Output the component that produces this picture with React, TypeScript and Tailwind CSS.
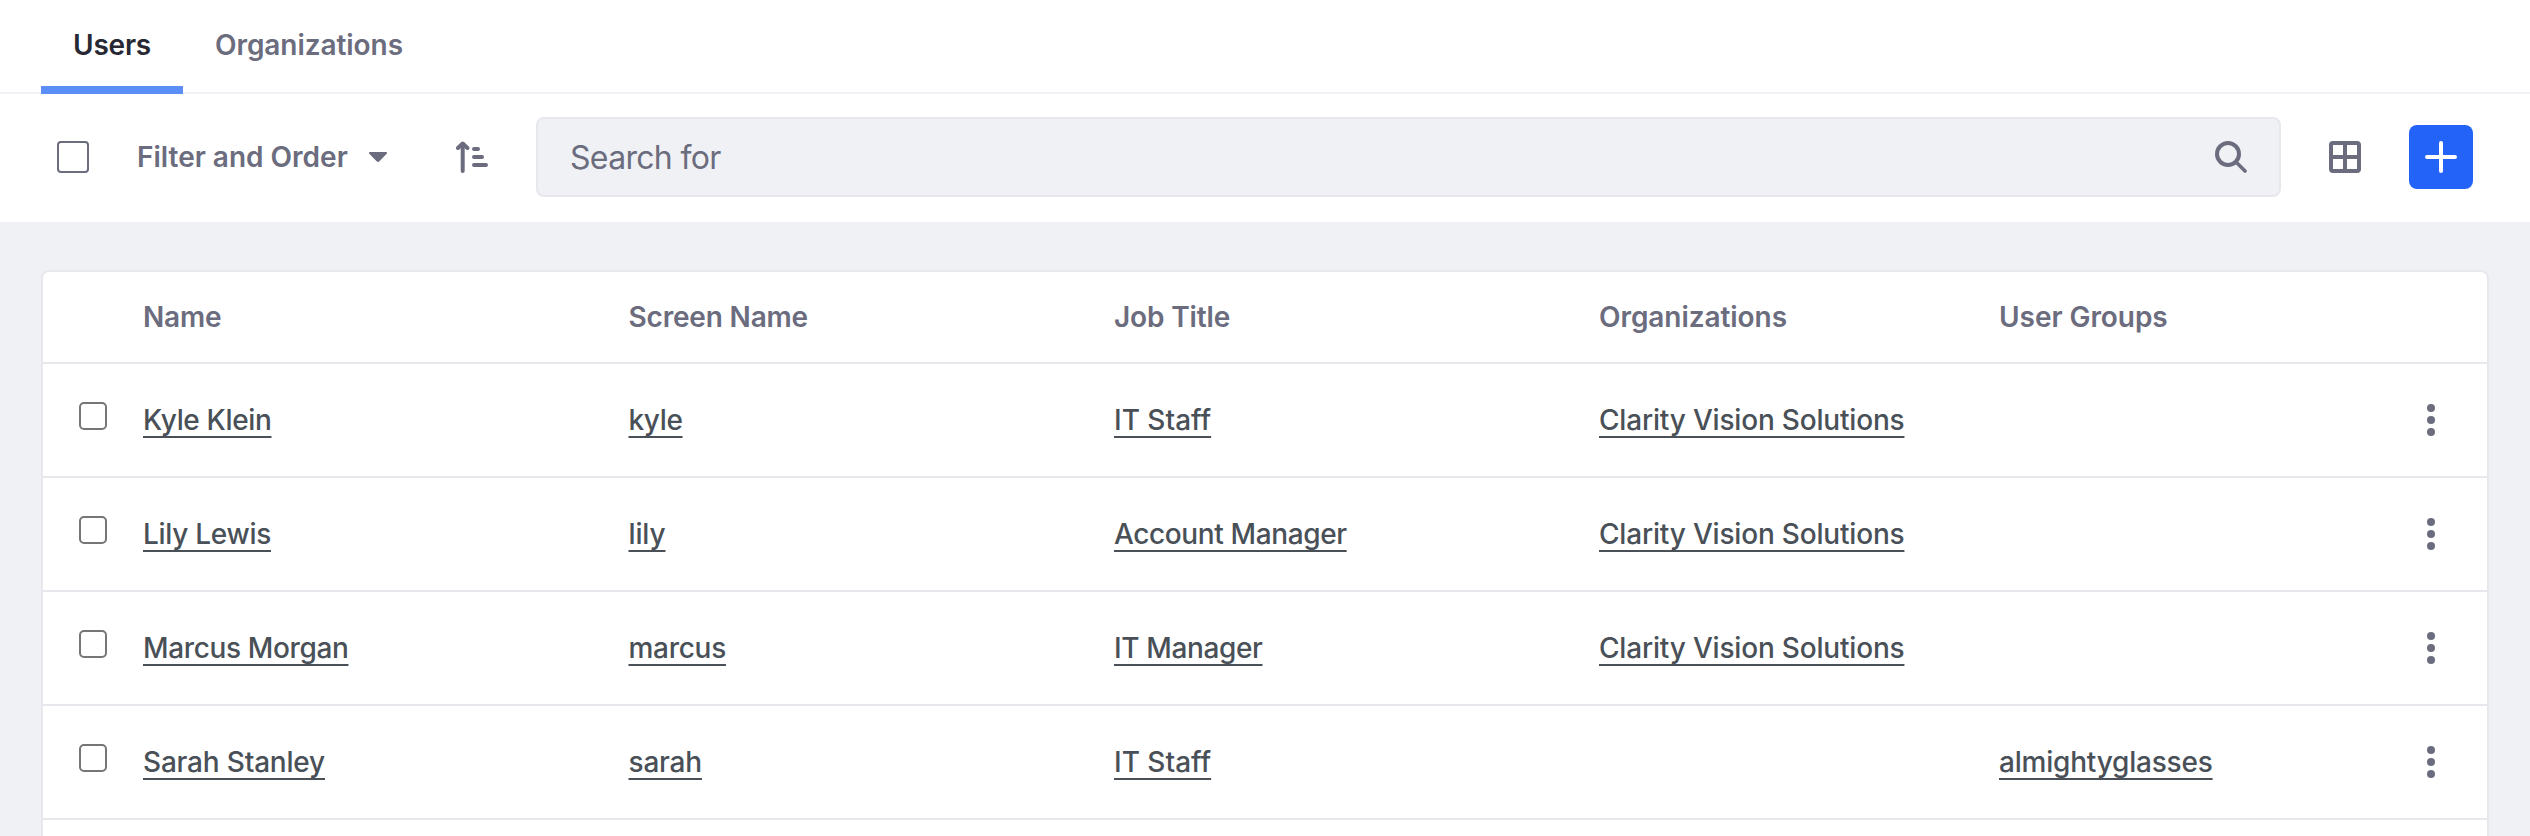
type Link = { text: string; tracking: string };
type User = {
  name: Link;
  screenName: Link;
  jobTitle: Link;
  organization?: Link;
  userGroup?: Link;
};

const clarity: Link = { text: 'Clarity Vision Solutions', tracking: 'tracking-[-0.19px]' };

const users: User[] = [
  {
    name: { text: 'Kyle Klein', tracking: 'tracking-[-0.35px]' },
    screenName: { text: 'kyle', tracking: 'tracking-[-0.35px]' },
    jobTitle: { text: 'IT Staff', tracking: 'tracking-normal' },
    organization: clarity,
  },
  {
    name: { text: 'Lily Lewis', tracking: 'tracking-[-0.29px]' },
    screenName: { text: 'lily', tracking: 'tracking-[-0.12px]' },
    jobTitle: { text: 'Account Manager', tracking: 'tracking-[-0.38px]' },
    organization: clarity,
  },
  {
    name: { text: 'Marcus Morgan', tracking: 'tracking-[-0.36px]' },
    screenName: { text: 'marcus', tracking: 'tracking-[-0.28px]' },
    jobTitle: { text: 'IT Manager', tracking: 'tracking-[-0.37px]' },
    organization: clarity,
  },
  {
    name: { text: 'Sarah Stanley', tracking: 'tracking-[-0.19px]' },
    screenName: { text: 'sarah', tracking: 'tracking-[-0.2px]' },
    jobTitle: { text: 'IT Staff', tracking: 'tracking-normal' },
    userGroup: { text: 'almightyglasses', tracking: 'tracking-[-0.21px]' },
  },
];

function SortIcon() {
  return (
    <svg className="size-8 shrink-0" viewBox="0 0 32 32" fill="none" stroke="currentColor" strokeWidth="4" strokeLinecap="round" strokeLinejoin="round">
      <path d="M6.7 30V3" />
      <path d="M2 7 6.7 2.5 11.4 7" />
      <path d="M18 8h4M18 16h8M18 24h12" />
    </svg>
  );
}

function SearchIcon() {
  return (
    <svg className="size-8 shrink-0" viewBox="0 0 32 32" fill="none" stroke="currentColor" strokeWidth="4" strokeLinecap="round">
      <circle cx="13" cy="13" r="11" />
      <path d="M21.5 21.5 30 30" strokeWidth="3.6" />
    </svg>
  );
}

function CardsIcon() {
  return (
    <svg className="size-8 shrink-0" viewBox="0 0 32 32" fill="currentColor" fillRule="evenodd">
      <path d="M4 0h24a4 4 0 0 1 4 4v24a4 4 0 0 1-4 4H4a4 4 0 0 1-4-4V4a4 4 0 0 1 4-4ZM4 4v10h10V4ZM18 4v10h10V4ZM4 18v10h10V18ZM18 18v10h10V18Z" />
    </svg>
  );
}

function PlusIcon() {
  return (
    <svg className="size-8" viewBox="0 0 32 32" stroke="currentColor" strokeWidth="4" strokeLinecap="round">
      <path d="M16 2v28M2 16h28" />
    </svg>
  );
}

function CaretIcon() {
  return (
    <svg className="h-[10px] w-[18px]" viewBox="0 0 18 10" fill="currentColor">
      <path d="M1 0h16c.9 0 1.3 1 .7 1.7l-7.3 7.6c-.8.9-2 .9-2.8 0L.3 1.7C-.3 1 .1 0 1 0Z" />
    </svg>
  );
}

function DotsIcon() {
  return (
    <svg className="h-8 w-2" viewBox="0 0 8 32" fill="currentColor">
      <circle cx="4" cy="4" r="4" />
      <circle cx="4" cy="16" r="4" />
      <circle cx="4" cy="28" r="4" />
    </svg>
  );
}

function Cell({ link }: { link?: Link }) {
  return (
    <div>
      {link && (
        <a className={`font-medium text-[#495057] underline decoration-2 underline-offset-[6px] [text-decoration-skip-ink:none] ${link.tracking}`}>
          {link.text}
        </a>
      )}
    </div>
  );
}

const columns = 'grid grid-cols-[100px_485.5px_485.5px_485px_400px_1fr] items-center border-b-2 border-[#e7e7ed]';

export default function App() {
  return (
    <div className="h-[836px] overflow-hidden bg-[#f0f1f5] font-['Inter',sans-serif] text-[28px] leading-[42px] text-[#6b6c7e]">
      <nav className="flex h-[94px] border-b-2 border-[#f0f1f5] bg-white pl-[41px] font-semibold">
        <a className="h-[94px] w-[142px] border-b-8 border-[#5b8ff7] pt-6 pl-8 tracking-[-0.2px] text-[#272833]">Users</a>
        <a className="px-8 pt-6 tracking-[-0.06px]">Organizations</a>
      </nav>

      <header className="flex h-32 items-start bg-white pt-[23px]">
        <div className="flex h-20 w-[536px] items-center pl-[57px]">
          <span className="size-8 shrink-0 rounded-[4px] border-2 border-[#6b6c7e] bg-white" />
          <button className="ml-12 flex w-[319px] shrink-0 items-center gap-[21px] text-left font-semibold whitespace-nowrap">
            Filter and Order
            <CaretIcon />
          </button>
          <SortIcon />
        </div>
        <div className="flex h-20 w-[1745px] items-center justify-between rounded-lg border-2 border-[#e7e7ed] bg-[#f0f1f5] pr-8 pl-8 text-[32px] tracking-[-0.68px]">
          <span className="pt-0.5">Search for</span>
          <SearchIcon />
        </div>
        <div className="flex h-20 items-center gap-12 pl-12">
          <CardsIcon />
          <button className="grid size-16 place-items-center rounded-lg bg-[#2463f8] text-white">
            <PlusIcon />
          </button>
        </div>
      </header>

      <main className="px-[41px] pt-12">
        <div className="h-[600px] rounded-lg border-2 border-[#e7e7ed] bg-white">
          <div className={`${columns} h-[92px] font-semibold`}>
            <div />
            <div className="tracking-[-0.2px]">Name</div>
            <div className="tracking-[-0.18px]">Screen Name</div>
            <div className="tracking-[-0.15px]">Job Title</div>
            <div className="tracking-[-0.06px]">Organizations</div>
            <div className="tracking-[-0.05px]">User Groups</div>
          </div>
          {users.map((user) => (
            <div key={user.name.text} className={`${columns} h-[114px]`}>
              <div className="self-start pt-[38px] pl-9">
                <span className="block size-7 rounded-[5px] border-2 border-[#767676] bg-white" />
              </div>
              <Cell link={user.name} />
              <Cell link={user.screenName} />
              <Cell link={user.jobTitle} />
              <Cell link={user.organization} />
              <div className="flex items-center justify-between pr-[52px]">
                <Cell link={user.userGroup} />
                <DotsIcon />
              </div>
            </div>
          ))}
        </div>
      </main>
    </div>
  );
}
